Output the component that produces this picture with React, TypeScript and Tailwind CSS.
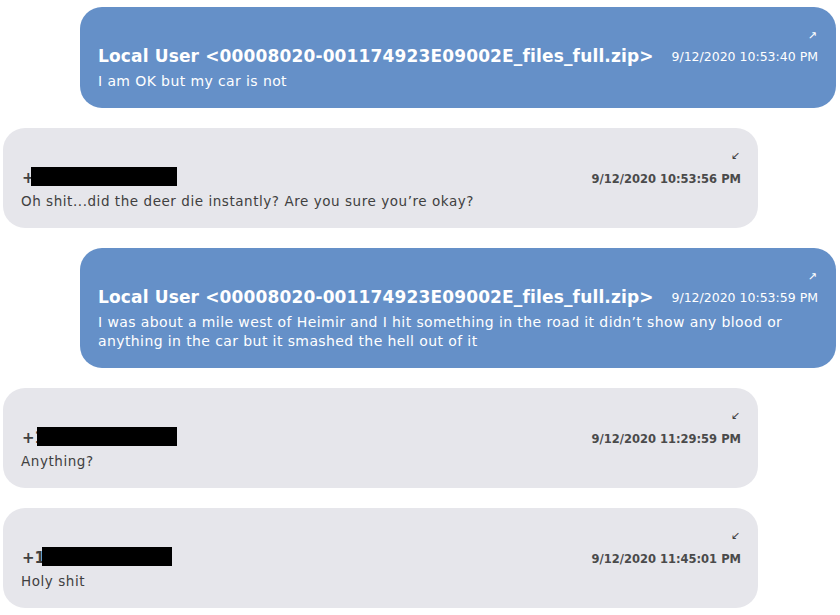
const messages = [
  {
    out: true,
    from: 'Local User <00008020-001174923E09002E_files_full.zip>',
    time: '9/12/2020 10:53:40 PM',
    text: 'I am OK but my car is not',
  },
  {
    out: false,
    time: '9/12/2020 10:53:56 PM',
    text: 'Oh shit...did the deer die instantly? Are you sure you’re okay?',
    box: 'left-[10px] w-[146px]',
    plus: '+',
  },
  {
    out: true,
    from: 'Local User <00008020-001174923E09002E_files_full.zip>',
    time: '9/12/2020 10:53:59 PM',
    text: 'I was about a mile west of Heimir and I hit something in the road it didn’t show any blood or anything in the car but it smashed the hell out of it',
  },
  {
    out: false,
    time: '9/12/2020 11:29:59 PM',
    text: 'Anything?',
    box: 'left-[16px] w-[140px]',
    plus: '+1',
  },
  {
    out: false,
    time: '9/12/2020 11:45:01 PM',
    text: 'Holy shit',
    box: 'left-[21px] w-[130px]',
    plus: '+1',
  },
]

const App = () => {
  return (
    <div className="w-[840px] h-[615px] bg-white pt-[7px] flex flex-col gap-[20px] font-['DejaVu_Sans',sans-serif] overflow-hidden">
      {messages.map((m, i) =>
        m.out ? (
          <div
            key={i}
            className="self-end mr-[4px] w-[756px] rounded-[22px] bg-[#6590c8] text-white pl-[18px] pr-[18px] pt-[23px] pb-[17px]"
          >
            <div className="flex justify-end text-[11px] leading-[12px] pr-[1px]">↗</div>
            <div className="flex items-end justify-between mt-[4px]">
              <span className="font-bold text-[17px] leading-[20px] tracking-[0.15px]">{m.from}</span>
              <span className="text-[12.5px] leading-[18px]">{m.time}</span>
            </div>
            <p className="text-[14px] leading-[19px] tracking-[0.4px] mt-[6px] pr-[20px]">{m.text}</p>
          </div>
        ) : (
          <div
            key={i}
            className="ml-[3px] w-[755px] rounded-[22px] bg-[#e6e6eb] text-[#404040] pl-[18px] pr-[17px] pt-[22px] pb-[18px]"
          >
            <div className="flex justify-end text-[11px] leading-[12px] pr-[1px]">↙</div>
            <div className="flex items-end justify-between mt-[6px]">
              <span className="relative font-bold text-[15px] leading-[20px] pl-[1px]">
                {m.plus}
                <span className={`absolute top-[-1px] h-[19px] bg-black ${m.box}`} />
              </span>
              <span className="font-semibold text-[11.5px] leading-[18px] text-[#4a4a4a]">{m.time}</span>
            </div>
            <p className="text-[13.5px] leading-[18px] tracking-[0.55px] mt-[4px]">{m.text}</p>
          </div>
        )
      )}
    </div>
  )
}

export default App
